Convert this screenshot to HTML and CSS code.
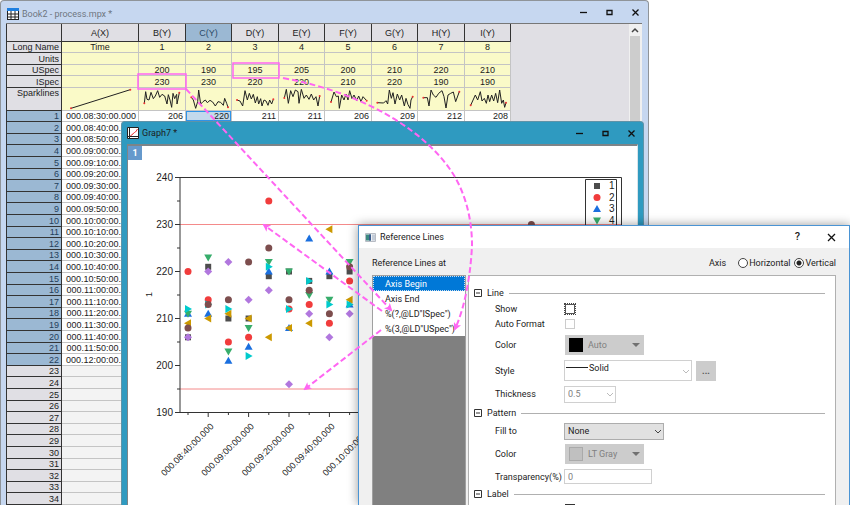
FILE: index.html
```html
<!DOCTYPE html>
<html lang="en">
<head>
<meta charset="utf-8">
<title>Reference Lines</title>
<link rel="stylesheet" href="styles.css">
</head>
<body>
<main class="desktop">
  <section class="window book">
    <header class="titlebar">
      <svg class="app-icon" width="12" height="12" viewBox="0 0 12 12"><path fill="#fff" d="M0 0h12v12H0z"/><path fill="#1e7fe0" d="M0 0h12v3H0z"/><path d="M.5 3v8.500M4 3v9M8 3v9M11.500 3v9M0 6h12M0 9h12M0 11.500h12" stroke="#222" fill="none"/></svg>
      <h1 class="title">Book2 - process.mpx *</h1>
      <div class="controls">
        <button aria-label="Minimize"><svg width="9" height="9"><path d="M1 4.500h7"/></svg></button>
        <button aria-label="Maximize"><svg width="9" height="9"><path d="M2 2.500h5v4h-5z"/></svg></button>
        <button aria-label="Close"><svg width="9" height="9"><path d="M1.500 1.500l6 6M7.500 1.500l-6 6"/></svg></button>
      </div>
    </header>
    <div class="sheet">
      <table class="grid">
        <colgroup><col class="c-head"><col class="c-time"><col class="c-odd"><col class="c-even"><col class="c-odd"><col class="c-even"><col class="c-odd"><col class="c-even"><col class="c-odd"><col class="c-even"></colgroup>
        <thead>
          <tr class="names"><th></th><th>A(X)</th><th>B(Y)</th><th class="picked">C(Y)</th><th>D(Y)</th><th>E(Y)</th><th>F(Y)</th><th>G(Y)</th><th>H(Y)</th><th>I(Y)</th></tr>
        </thead>
        <tbody class="meta">
          <tr class="short"><th>Long Name</th><td>Time</td><td>1</td><td>2</td><td>3</td><td>4</td><td>5</td><td>6</td><td>7</td><td>8</td></tr>
          <tr><th>Units</th><td></td><td></td><td></td><td></td><td></td><td></td><td></td><td></td><td></td></tr>
          <tr class="short"><th>USpec</th><td></td><td>200</td><td>190</td><td>195</td><td>205</td><td>200</td><td>210</td><td>220</td><td>210</td></tr>
          <tr><th>ISpec</th><td></td><td>230</td><td>230</td><td>220</td><td>220</td><td>210</td><td>220</td><td>190</td><td>190</td></tr>
          <tr class="sparks" id="sparks"><th>Sparklines</th></tr>
        </tbody>
        <tbody class="data" id="data"></tbody>
      </table>
      <div class="scroll"><button aria-label="Scroll up"><svg width="8" height="6"><path d="M1 5l3-3 3 3"/></svg></button></div>
    </div>
  </section>

  <section class="window graph">
    <header class="titlebar">
      <svg class="app-icon" width="12" height="12" viewBox="0 0 12 12"><path fill="#fff" stroke="#222" d="M.5.5h11v11H.5z"/><path d="M2.500 1v8.500H11M1 9.500h1.500M2.500 11V9.500" stroke="#222" fill="none"/><path d="M3.500 8.500C6 8 6 6 7.500 5.500S9.500 3.500 10.500 2" stroke="#e22" fill="none"/></svg>
      <h2 class="title">Graph7 *</h2>
      <div class="controls">
        <button aria-label="Minimize"><svg width="9" height="9"><path d="M1 4.500h7"/></svg></button>
        <button aria-label="Maximize"><svg width="9" height="9"><path d="M2 2.500h5v4h-5z"/></svg></button>
        <button aria-label="Close"><svg width="9" height="9"><path d="M1.500 1.500l6 6M7.500 1.500l-6 6"/></svg></button>
      </div>
    </header>
    <div class="page">
      <button class="layer">1</button>
      <svg class="chart" id="chart" width="509" height="360" viewBox="128 146 509 360"></svg>
    </div>
  </section>

  <section class="dialog">
    <header class="dialog-bar">
      <svg width="11" height="9" viewBox="0 0 11 9"><path fill="#eef0f4" stroke="#b8bcc4" d="M.5.5h10v8H.5z"/><path fill="#3c8a80" d="M1 1.500h5v6H1z"/><path fill="#3a5a8c" d="M4 1.500h2v6H4z"/><path fill="#c4ccd8" d="M7 1.500h3v6H7z"/></svg>
      <h2 class="title">Reference Lines</h2>
      <button class="help" aria-label="Help">?</button>
      <button class="close" aria-label="Close"><svg width="9" height="9"><path d="M1 1l7 7M8 1l-7 7"/></svg></button>
    </header>
    <div class="choice">
      <span id="at">Reference Lines at</span>
      <span class="axis">Axis</span>
      <label><input type="radio" name="axis">Horizontal</label>
      <label><input type="radio" name="axis" checked>Vertical</label>
    </div>
    <div class="body">
      <ul class="lines" role="listbox" aria-labelledby="at">
        <li role="option" aria-selected="true">Axis Begin</li>
        <li role="option">Axis End</li>
        <li role="option">%(?,@LD"ISpec")</li>
        <li role="option">%(3,@LD"USpec")</li>
      </ul>
      <form class="panel">
        <h3 class="group"><svg width="8" height="8"><path d="M.5.5h7v7h-7zM2 4h4"/></svg>Line</h3>
        <div class="row r-small"><label for="show">Show</label><input class="focus" id="show" type="checkbox"></div>
        <div class="row r-small"><label for="auto">Auto Format</label><input id="auto" type="checkbox" disabled></div>
        <div class="row r-color"><label for="lc">Color</label><button class="color" id="lc" type="button" disabled><span class="swatch black"></span>Auto<svg width="8" height="4"><path d="M0 0h8L4 4z"/></svg></button></div>
        <div class="row r-style"><label for="style">Style</label><span class="pick wide"><select id="style" disabled><option>Solid</option></select><svg class="rule" width="22" height="1"><path d="M0 .5h22"/></svg><svg class="chev" width="8" height="5"><path d="M1 1l3 3 3-3"/></svg></span><button class="more" type="button" disabled>...</button></div>
        <div class="row r-thick"><label for="thick">Thickness</label><span class="pick thin"><select id="thick" disabled><option>0.5</option></select><svg class="chev" width="8" height="5"><path d="M1 1l3 3 3-3"/></svg></span></div>
        <h3 class="group"><svg width="8" height="8"><path d="M.5.5h7v7h-7zM2 4h4"/></svg>Pattern</h3>
        <div class="row r-fill"><label for="fill">Fill to</label><span class="pick fill"><select id="fill"><option>None</option></select><svg class="chev" width="8" height="5"><path d="M1 1l3 3 3-3"/></svg></span></div>
        <div class="row r-color"><label for="pc">Color</label><button class="color" id="pc" type="button" disabled><span class="swatch"></span>LT Gray<svg width="8" height="4"><path d="M0 0h8L4 4z"/></svg></button></div>
        <div class="row r-trans"><label for="tr">Transparency(%)</label><input id="tr" type="text" value="0" disabled></div>
        <h3 class="group"><svg width="8" height="8"><path d="M.5.5h7v7h-7zM2 4h4"/></svg>Label</h3>
        <div class="row r-last"><input aria-label="Show label" type="checkbox"></div>
      </form>
    </div>
  </section>

  <svg class="notes" aria-hidden="true">
    <defs><marker id="tip" viewBox="0 0 8 8" refX="6" refY="4" markerWidth="8" markerHeight="8" markerUnits="userSpaceOnUse" orient="auto"><path d="M0 0l8 4-8 4 2-4z"/></marker></defs>
    <rect x="138" y="74" width="48" height="15"/>
    <rect x="233" y="63" width="46" height="15"/>
    <g stroke-dasharray="6 3">
      <path marker-end="url(#tip)" d="M186 89L391 310"/>
      <path marker-end="url(#tip)" d="M382 311L264 225"/>
      <path marker-end="url(#tip)" d="M381 330L305 389"/>
      <path marker-end="url(#tip)" d="M283 78C370 94 430 135 455 177C468 200 472 225 472 245C471 270 466 305 455 329"/>
    </g>
  </svg>
</main>
<script src="script.js"></script>
</body>
</html>
```
FILE: styles.css
```css
* { box-sizing: border-box; }
body { margin: 0; background: #fff; color: #1c1c1c; font: 9px/12px Roboto, "Noto Sans", sans-serif; }
h1, h2, h3, ul { margin: 0; padding: 0; font: inherit; }
button, input, select { font: inherit; color: inherit; margin: 0; }
button { padding: 0; border: 0; background: none; }
svg { display: block; }

.desktop { position: relative; height: 100vh; overflow: hidden; }
.window { position: absolute; display: flex; flex-direction: column; bottom: 0; border: 1px solid #8f9499; border-bottom: 0; border-radius: 4px 4px 0 0; }
.book { left: 0; top: 0; width: 649px; padding: 0 6px 0 5px; background: #c6d7f0; }
.graph { left: 121px; top: 121px; width: 523px; padding: 0 5px; background: #2f9ac0; border-color: #5f93a8; }

.titlebar { display: flex; align-items: center; gap: 3px; height: 22px; flex: none; }
.book .titlebar { color: #6f7680; padding: 4px 0 0 1px; }
.titlebar .title { flex: 1; }
.controls { display: flex; gap: 17px; color: #111; padding-right: 2px; }
.book .controls { margin-top: -4px; }
.controls svg, .close svg { fill: none; stroke: #111; stroke-width: 1.300; }

.sheet { flex: 1; display: flex; justify-content: space-between; align-items: flex-start; border-top: 1px solid #777; background: #e0dfe4; min-height: 0; overflow: hidden; }
.grid { table-layout: fixed; width: 505px; border-collapse: separate; border-spacing: 0; font: 9px/10px "Liberation Sans", sans-serif; }
.c-head { width: 56px; }
.c-time { width: 77px; }
.c-odd { width: 47px; }
.c-even { width: 46px; }
.grid th, .grid td { padding: 0; border: 0 solid #c4c4c4; border-width: 0 1px 1px 0; font-weight: normal; white-space: nowrap; overflow: hidden; }
.grid th { background: #e0dfe4; border-color: #333; }
.grid tbody th { text-align: right; padding-right: 2px; }
.grid tr { height: 12px; }
.grid tr.names { height: 18px; }
.grid tr.short { height: 11px; }
.grid tr.sparks { height: 23px; }
.sparks th { vertical-align: top; }
.grid th:first-child { border-left: 1px solid #333; }
.grid th.picked { background: #9bb8d3; color: #2c4a68; }
.meta td { text-align: center; background: #fafac8; }
.sparks polyline { fill: none; stroke: #222; stroke-width: 3; }
.sparks circle { fill: #e33; }
.data td { text-align: right; padding-right: 2px; background: #fff; }
.data tr:nth-child(5n+1), .data tr:nth-child(5n+3) { height: 11px; }
.grid .data .used th { background: #9bb8d3; color: #24405c; }
.data .empty td { background: #f3f3f3; }
.grid .data td.cell { background: #c3d9ec; box-shadow: inset 0 0 0 1px #2f94e8; }
.scroll { align-self: stretch; width: 13px; background: #cdcdcd; border: 0 solid #f0f0f0; border-width: 0 2px 0 1px; }
.scroll button { display: flex; justify-content: center; align-items: center; width: 100%; height: 12px; background: #f0f0f0; }
.scroll svg { fill: none; stroke: #444; stroke-width: 1.500; }

.page { position: relative; flex: 1; min-height: 0; overflow: hidden; background: #fff; border: solid #7d8488; border-width: 2px 1px 0; border-right-color: #d8e4ea; }
.layer { position: absolute; left: 0; top: 0; width: 14px; height: 14px; background: #6699cc; color: #fff; font-weight: bold; }
.chart { font-family: "Liberation Sans", sans-serif; fill: #1c1c1c; }
.chart .axis-line { fill: none; stroke: #333; }
.chart .limit { stroke: #f48a8a; }
.chart .y { font-size: 10px; text-anchor: end; }
.chart .x { font-size: 9px; text-anchor: end; }
.s1 { fill: #4d4d4d; } .s2 { fill: #f13c3c; } .s3 { fill: #1a6fdf; } .s4 { fill: #37ad6b; }
.s5 { fill: #b177de; } .s6 { fill: #cc9900; } .s7 { fill: #00cbcc; } .s8 { fill: #7d4e4e; }

.dialog { position: absolute; left: 358px; top: 225px; right: 0; bottom: 0; display: flex; flex-direction: column; background: #f0f0f0; border: 1px solid #4a94d4; border-bottom: 0; box-shadow: 0 0 10px rgba(0, 0, 0, .4); }
.dialog-bar { display: flex; align-items: center; flex: none; height: 22px; padding: 0 13px 0 6px; background: #fff; }
.dialog-bar .title { flex: 1; margin-left: 4px; }
.help { margin-right: 27px; font-size: 11px; font-weight: 500; }
.choice { display: flex; align-items: center; flex: none; height: 27px; padding: 2px 13px 0; }
.choice .axis { flex: 1; text-align: right; margin-right: 12px; }
.choice label { display: flex; align-items: center; gap: 1px; }
.choice label + label { margin-left: 4px; }
.choice input { appearance: none; width: 10px; height: 10px; border: 1px solid #444; border-radius: 50%; background: #fff; }
.choice input:checked { background: radial-gradient(circle, #222 0 2px, #fff 3px); }
.body { flex: 1; display: flex; gap: 2px; min-height: 0; padding: 0 13px; }
.lines { width: 94px; flex: none; list-style: none; background: #808080; border: 1px solid #a0a0a0; border-bottom: 0; }
.lines li { height: 15px; padding: 1px 0 0 12px; line-height: 14px; background: #fff; white-space: nowrap; }
.lines li[aria-selected] { background: #0078d7; color: #fff; outline: 1px dotted #cde; outline-offset: -1px; }
.panel { flex: 1; min-width: 0; overflow: hidden; padding: 9px 10px 0 5px; background: #fff; border: 1px solid #b0b0b0; border-bottom: 0; }
.group { display: flex; align-items: center; gap: 5px; height: 16px; }
.group::after { content: ""; flex: 1; border-top: 1px solid #b0b0b0; }
.group svg { fill: none; stroke: #333; }
.row { display: flex; align-items: center; padding-left: 21px; }
.row > label { width: 70px; flex: none; white-space: nowrap; }
.r-small { height: 15px; }
.r-small + .r-small { height: 16px; }
.r-color { height: 26px; }
.r-style { height: 25px; }
.r-thick { height: 22px; }
.r-fill { height: 20px; }
.r-trans { height: 19px; }
.r-last { padding: 2px 0 0 91px; }
.row [type=checkbox] { appearance: none; width: 10px; height: 10px; border: 1px solid #ccc; background: #fff; }
.row .focus { border-color: #555; outline: 1px dotted #444; }
.row.r-last [type=checkbox] { border-color: #333; }
.color { display: flex; align-items: center; gap: 5px; width: 79px; height: 20px; padding: 0 4px; background: #ccc; color: #808080; }
.color svg { margin-left: auto; fill: #707070; }
.swatch { width: 14px; height: 14px; background: #c0c0c0; border: 1px solid #aaa; }
.black { background: #000; border-color: #000; }
.pick { position: relative; margin-left: -1px; }
.pick select, .row [type=text] { display: block; width: 100%; height: 100%; appearance: none; padding: 0 3px; border: 1px solid #d0d0d0; border-radius: 0; background: #fff; opacity: 1; color: #808080; }
.pick .chev { position: absolute; right: 2px; top: 50%; margin-top: -2px; fill: none; stroke: #bbb; }
.wide { width: 128px; height: 21px; }
.wide select { padding: 0 24px 5px; color: #1c1c1c; }
.wide .rule { position: absolute; left: 2px; top: 7px; stroke: #222; }
.thin { width: 52px; height: 17px; }
.fill { width: 100px; height: 17px; }
.fill select { background: #e1e1e1; border-color: #adadad; color: #1c1c1c; }
.fill .chev { stroke: #444; }
.row [type=text] { width: 88px; height: 15px; margin-left: -1px; }
.more { width: 20px; height: 20px; margin-left: 4px; background: #ccc; color: #555; font-weight: bold; }

.notes { position: absolute; left: 0; top: 0; width: 100%; height: 100%; pointer-events: none; fill: none; stroke: #ff66f2; stroke-width: 2; }
.notes rect { stroke-width: 1.500; }
.notes marker path { fill: #ff66f2; stroke: none; }
```
FILE: script.js
```js
// Sparkline shapes: left edge and width of the cell, then its points.
const sparks = [
  [186, 228, "213,325 391,269"],
  [417, 138, "433,310 437,275 441,298 447,300 453,277 460,296 466,288 473,272 479,292 486,283 494,288 501,312 505,284 510,300 515,322 519,280 524,296 530,283 531,312 538,278"],
  [556, 138, "572,292 578,300 585,325 591,305 594,270 600,312 607,305 614,300 620,308 628,301 636,306 644,318 652,305 660,307 668,316 672,295 678,310 682,322"],
  [696, 138, "711,300 720,303 728,318 735,272 742,300 748,280 754,297 760,283 766,309 772,290 776,312 782,296 786,318 792,300 798,303 804,316 809,300 815,312 820,298"],
  [146, 138, "162,294 168,268 174,310 181,272 188,290 195,270 203,275 206,310 213,268 221,295 228,285 236,298 243,282 250,300 257,290 263,318 268,288"],
  [285, 138, "303,306 312,276 319,290 325,288 328,325 335,285 342,300 348,282 354,300 359,272 366,296 372,285 380,302 386,288 393,305 399,290 410,302"],
  [425, 138, "441,308 460,309 467,302 472,312 477,270 483,295 488,278 494,312 501,282 508,300 514,285 522,318 527,295 533,314 539,325 542,300 547,290"],
  [564, 138, "580,293 592,293 597,318 603,270 610,285 618,292 626,280 636,272 642,290 648,324 654,285 662,280 670,276 677,305 688,275"],
  [704, 138, "721,316 735,285 742,300 750,275 755,303 762,295 768,310 773,285 778,305 784,285 790,303 796,280 802,308 808,270 814,310 819,300 823,322 827,308"]
];
document.getElementById("sparks").insertAdjacentHTML("beforeend", sparks.map(([x, w, pts]) => {
  const all = pts.split(" ");
  const dots = [all[0], all[all.length - 1]].map(p => {
    const [a, b] = p.split(",");
    return `<circle cx="${a}" cy="${b}" r="3"/>`;
  }).join("");
  return `<td><svg width="${w / 3}" height="22" viewBox="${x} 264 ${w} 66"><polyline points="${pts}"/>${dots}</svg></td>`;
}).join(""));

// Worksheet rows: one reading every ten minutes from 08:30.
const first = [206, 220, 211, 211, 206, 209, 212, 208];
let rows = "";
for (let n = 1; n <= 34; n++) {
  const minutes = 500 + n * 10;
  const time = `000.${String(Math.floor(minutes / 60)).padStart(2, "0")}:${String(minutes % 60).padStart(2, "0")}:00.000`;
  const cells = first.map((v, i) => `<td${n === 1 && i === 1 ? ' class="cell"' : ""}>${n === 1 ? v : ""}</td>`).join("");
  rows += `<tr class="${n <= 22 ? "used" : "empty"}"><th>${n}</th><td>${n <= 22 ? time : ""}</td>${cells}</tr>`;
}
document.getElementById("data").innerHTML = rows;

// Scatter chart.
const series = [
  [206, 221, 210, 210, 219, 220, 218, 219, 220],
  [220, 214, 205, 206, 235, 212, 213, 209, 218],
  [211, 211, 201, 204, 220, 208, 227, 220, 213],
  [211, 223, 203, 208, 222, 220, 215, 214, 222],
  [206, 220, 222, 214, 216, 196, 211, 206, 211],
  [209, 210, 211, 210, 206, 208, 209, 229, 214],
  [212, 213, 212, 202, 221, 212, 218, 213, 213],
  [208, 213, 214, 222, 225, 214, 216, 211, 221]
];
const shapes = [
  "M-3 -3h6v6h-6z",
  "M-3.500 0a3.500 3.500 0 1 0 7 0a3.500 3.500 0 1 0 -7 0z",
  "M-4 3L0 -4L4 3z",
  "M-4 -3L0 4L4 -3z",
  "M-4 0L0 -4L4 0L0 4z",
  "M-4 0L3 -4V4z",
  "M4 0L-3 -4V4z",
  "M-3.500 0a3.500 3.500 0 1 0 7 0a3.500 3.500 0 1 0 -7 0z"
];
const px = i => 188 + i * 20.2;
const py = v => 177.5 + (240 - v) * 4.7;
const mark = (s, x, y) => `<path class="s${s + 1}" transform="translate(${x} ${y})" d="${shapes[s]}"/>`;
let out = `<path class="limit" d="M180 ${py(230)}H621M180 ${py(195)}H621"/><path class="axis-line" d="M180 177.500H621.500V412.500H180z"/>`;
for (let v = 190; v <= 240; v += 5) {
  const major = v % 10 === 0;
  out += `<path class="axis-line" d="M${major ? 175 : 177} ${py(v)}H180"/>`;
  if (major) out += `<text class="y" x="173" y="${py(v) + 3}">${v}</text>`;
}
for (let i = 0; i < 21; i++) {
  out += `<path class="axis-line" d="M${px(i)} 413v${i % 2 ? 4 : 2}"/>`;
  if (i % 2) {
    const m = 510 + i * 10;
    out += `<text class="x" transform="translate(${px(i) + 6} 427) rotate(-45)">000.${String(Math.floor(m / 60)).padStart(2, "0")}:${String(m % 60).padStart(2, "0")}:00.000</text>`;
  }
}
series.forEach((vals, s) => vals.forEach((v, i) => { out += mark(s, px(i), py(v)); }));
out += mark(7, px(17), py(230));
out += `<text font-size="9" transform="translate(152 297) rotate(-90)">1</text>`;
out += `<path class="axis-line" d="M585.500 179.500h31v130h-31z"/>`;
for (let s = 0; s < 8; s++) out += mark(s, 597, 186 + s * 11.5) + `<text font-size="10" x="609" y="${189 + s * 11.5}">${s + 1}</text>`;
document.getElementById("chart").innerHTML = out;
```
